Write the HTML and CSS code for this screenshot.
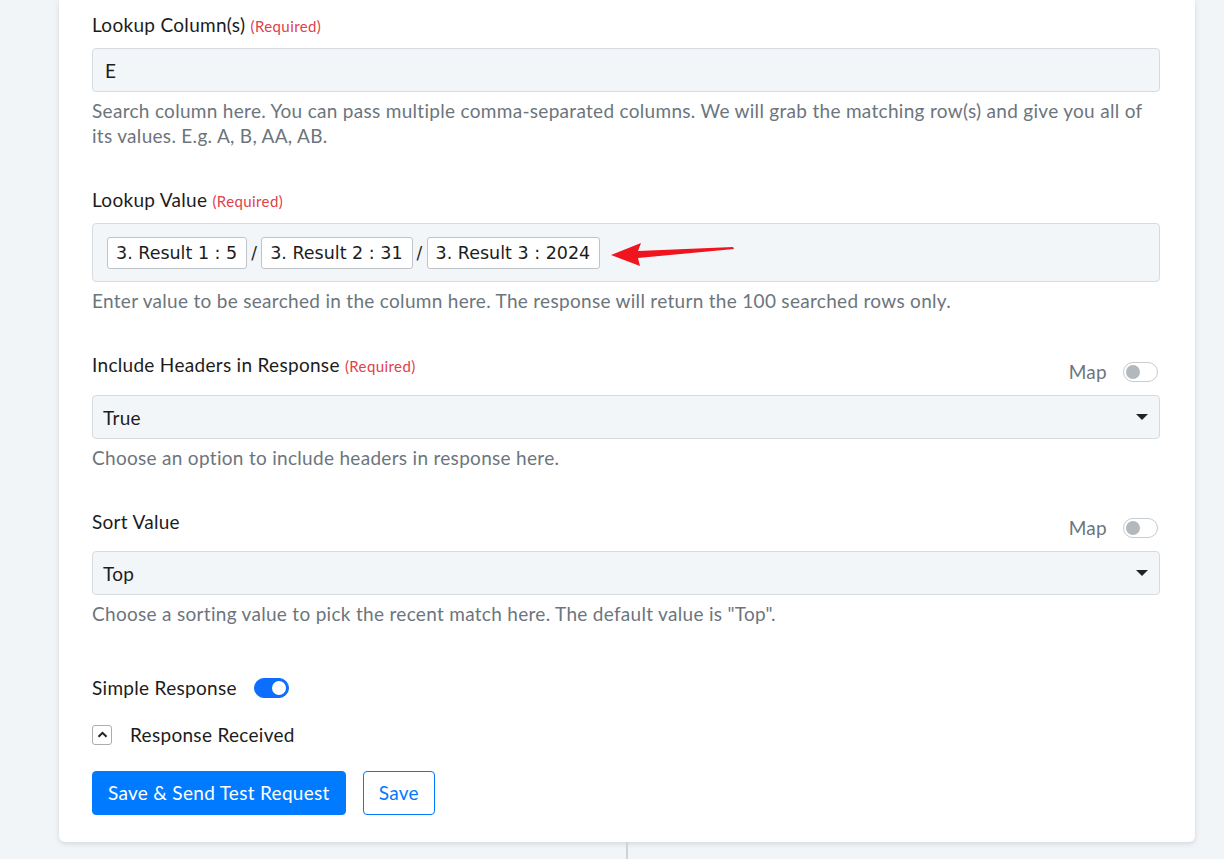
FILE: index.html
```html
<!DOCTYPE html>
<html lang="en">
<head>
    <meta charset="UTF-8">
    <title>Lookup Spreadsheet Row</title>
    <link rel="stylesheet" href="styles.css">
</head>
<body>
<div class="pagina">
    <div class="tarjeta">
        <div class="campo">
            <div class="etiqueta">Lookup Column(s) <span class="requerido">(Required)</span></div>
            <div class="entrada">E</div>
            <div class="ayuda">Search column here. You can pass multiple comma-separated columns. We will grab the matching row(s) and give you all of its values. E.g. A, B, AA, AB.</div>
        </div>

        <div class="campo">
            <div class="etiqueta">Lookup Value <span class="requerido">(Required)</span></div>
            <div class="entrada entrada_alta">
                <span class="pastilla">3. Result 1 : 5</span>
                <span class="barra">/</span>
                <span class="pastilla">3. Result 2 : 31</span>
                <span class="barra">/</span>
                <span class="pastilla">3. Result 3 : 2024</span>
                <svg class="flecha" width="124" height="24" viewBox="0 0 124 24">
                    <path d="M0 12 L30 0 L27 8 L122 4 L123 6 L27 15 L29 23 Z" fill="#f0141e"/>
                </svg>
            </div>
            <div class="ayuda">Enter value to be searched in the column here. The response will return the 100 searched rows only.</div>
        </div>

        <div class="campo">
            <div class="cabecera">
                <div class="etiqueta">Include Headers in Response <span class="requerido">(Required)</span></div>
                <div class="mapa">Map <span class="interruptor"></span></div>
            </div>
            <div class="entrada selector">True <span class="triangulo"></span></div>
            <div class="ayuda">Choose an option to include headers in response here.</div>
        </div>

        <div class="campo">
            <div class="cabecera">
                <div class="etiqueta">Sort Value</div>
                <div class="mapa">Map <span class="interruptor"></span></div>
            </div>
            <div class="entrada selector">Top <span class="triangulo"></span></div>
            <div class="ayuda">Choose a sorting value to pick the recent match here. The default value is "Top".</div>
        </div>

        <div class="simple">Simple Response <span class="interruptor activo"></span></div>

        <div class="recibido">
            <span class="chevron">
                <svg width="11" height="7" viewBox="0 0 11 7"><path d="M1.5 5.8 L5.5 1.8 L9.5 5.8" fill="none" stroke="#222" stroke-width="2"/></svg>
            </span>
            Response Received
        </div>

        <div class="botones">
            <div class="boton boton_azul">Save &amp; Send Test Request</div>
            <div class="boton boton_borde">Save</div>
        </div>
    </div>
    <div class="linea"></div>
</div>
</body>
</html>
```

FILE: styles.css
```css
body {
    margin: 0;
    background-color: #f2f5f8;
    font-family: Lato, "Noto Sans", sans-serif;
    color: #1c1c1c;
}
.pagina {
    width: 1136px;
    margin-left: 59px;
}
.tarjeta {
    background-color: #ffffff;
    border-radius: 0 0 6px 6px;
    box-shadow: 0 2px 5px rgba(40, 50, 70, 0.15);
    padding: 13px 35px 27px 33px;
}
.campo {
    margin-bottom: 40px;
}
.cabecera {
    display: flex;
    justify-content: space-between;
    align-items: flex-end;
}
.etiqueta {
    font-size: 19px;
    letter-spacing: 0.3px;
    line-height: 24px;
    margin-bottom: 10px;
}
.cabecera .etiqueta {
    margin-bottom: 17px;
}
.requerido {
    color: #e0414c;
    font-size: 15px;
    letter-spacing: 0.4px;
}
.entrada {
    height: 42px;
    background-color: #f3f6f9;
    border: 1px solid #d6dbe1;
    border-radius: 4px;
    padding: 0 12px;
    display: flex;
    align-items: center;
    font-size: 19px;
    letter-spacing: 0.3px;
}
.entrada_alta {
    height: 57px;
    padding: 0 14px;
}
.pastilla {
    font-family: "DejaVu Sans", Verdana, sans-serif;
    font-size: 17.5px;
    letter-spacing: 0;
    background-color: #ffffff;
    border: 1px solid #bfc4c9;
    border-radius: 3px;
    padding: 0 9px 0 8px;
    height: 30px;
    line-height: 30px;
}
.barra {
    font-family: "DejaVu Sans", Verdana, sans-serif;
    font-size: 17px;
    margin: 0 4px;
}
.flecha {
    margin-left: 11px;
    margin-top: 4px;
}
.ayuda {
    color: #6c757d;
    font-size: 19px;
    letter-spacing: 0.3px;
    line-height: 25px;
    margin-top: 6px;
}
.mapa {
    color: #6c757d;
    font-size: 19px;
    letter-spacing: 0.3px;
    display: flex;
    align-items: center;
    gap: 16px;
    margin-bottom: 12px;
    margin-right: 2px;
}
.interruptor {
    display: inline-block;
    position: relative;
    width: 33px;
    height: 18px;
    border: 1px solid #c6cbd0;
    border-radius: 10px;
    background-color: #ffffff;
}
.interruptor::after {
    content: "";
    position: absolute;
    left: 2px;
    top: 2px;
    width: 14px;
    height: 14px;
    border-radius: 50%;
    background-color: #b3b8bd;
}
.interruptor.activo {
    background-color: #0d6efd;
    border-color: #0d6efd;
}
.interruptor.activo::after {
    left: auto;
    right: 2px;
    background-color: #ffffff;
}
.selector {
    justify-content: space-between;
    padding: 0 11px 0 10px;
}
.triangulo {
    width: 0;
    height: 0;
    border-left: 6px solid transparent;
    border-right: 6px solid transparent;
    border-top: 6px solid #222;
}
.simple {
    display: flex;
    align-items: center;
    gap: 17px;
    font-size: 19px;
    letter-spacing: 0.3px;
    margin-top: 50px;
}
.recibido {
    display: flex;
    align-items: center;
    gap: 18px;
    font-size: 19px;
    letter-spacing: 0.3px;
    margin-top: 24px;
}
.chevron {
    width: 18px;
    height: 18px;
    border: 1px solid #a9aeb3;
    border-radius: 3px;
    display: flex;
    align-items: center;
    justify-content: center;
}
.botones {
    display: flex;
    gap: 17px;
    margin-top: 25px;
}
.boton {
    height: 42px;
    line-height: 42px;
    border-radius: 4px;
    font-size: 19px;
    letter-spacing: 0.3px;
    padding: 0 15px;
}
.boton_azul {
    background-color: #007bff;
    color: #ffffff;
    border: 1px solid #007bff;
}
.boton_borde {
    color: #007bff;
    border: 1px solid #007bff;
}
.linea {
    width: 2px;
    height: 20px;
    background-color: #cfd3d8;
    margin-left: 567px;
}
```
